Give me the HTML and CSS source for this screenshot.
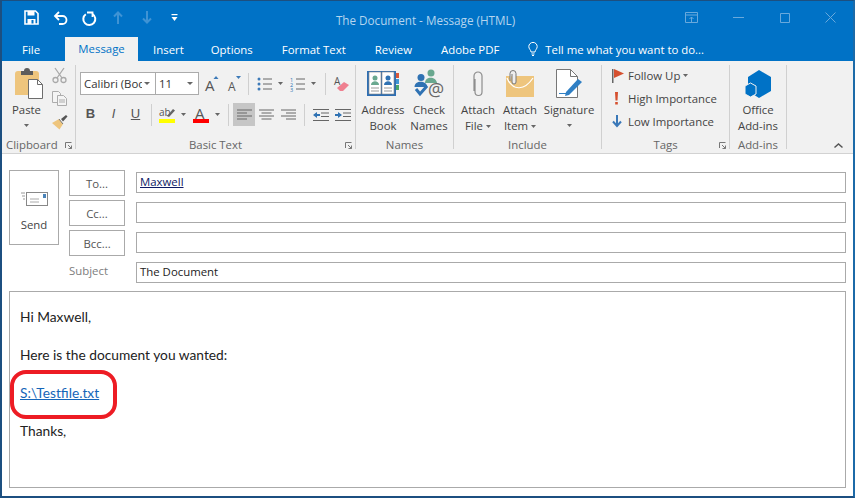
FILE: index.html
```html
<!DOCTYPE html>
<html lang="en">
<head>
<meta charset="utf-8">
<title>The Document - Message (HTML)</title>
<link rel="stylesheet" href="styles.css">
</head>
<body>
<div class="window">
  <header class="titlebar">
    <div class="qat">
      <svg class="q-save" width="15" height="15" viewBox="0 0 15 15"><path d="M1 1h10.500L14 3.500V14H1z" fill="none" stroke="#fff" stroke-width="1.600"/><rect x="3.500" y="1" width="7" height="4.500" fill="#fff"/><rect x="3.500" y="9" width="8" height="5" fill="#fff"/><rect x="7.500" y="10" width="2" height="3.500" fill="#0072c6"/></svg>
      <svg class="q-undo" width="15" height="14" viewBox="0 0 15 14"><path d="M2 5h7.500a4 4 0 0 1 4 4v0a4 4 0 0 1-4 4H6" fill="none" stroke="#fff" stroke-width="1.800"/><path d="M6 1 2 5l4 4" fill="none" stroke="#fff" stroke-width="1.800"/></svg>
      <svg class="q-redo" width="14" height="14" viewBox="0 0 14 14"><path d="M3.800 3.200a6 6 0 1 0 6.700-.2" fill="none" stroke="#fff" stroke-width="2"/><path d="M5 1.500h5.500V6" fill="none" stroke="#fff" stroke-width="1.800"/></svg>
      <svg class="q-up" width="10" height="13" viewBox="0 0 10 13"><path d="M5 13V2M1 5.500 5 1.500l4 4" fill="none" stroke="#3f93d4" stroke-width="2"/></svg>
      <svg class="q-down" width="10" height="13" viewBox="0 0 10 13"><path d="M5 0v11M1 7.500l4 4 4-4" fill="none" stroke="#3f93d4" stroke-width="2"/></svg>
      <svg class="q-more" width="7" height="8" viewBox="0 0 7 8"><rect width="6" height="1.200" x=".5" fill="#fff"/><path d="M.5 3h6L3.500 7z" fill="#fff"/></svg>
    </div>
    <div class="doc-title">The Document - Message (HTML)</div>
    <div class="winctl">
      <svg class="w-opt" width="13" height="11" viewBox="0 0 13 11"><path d="M.5.500h12v10H.500zM.5 3h12M6.500 10V5M4.500 7l2-2 2 2" fill="none" stroke="#69a9dc"/></svg>
      <svg class="w-min" width="11" height="11" viewBox="0 0 11 11"><path d="M0 5.500h11" stroke="#69a9dc"/></svg>
      <svg class="w-max" width="10" height="10" viewBox="0 0 10 10"><path d="M.5.500h9v9h-9z" fill="none" stroke="#69a9dc"/></svg>
      <svg class="w-close" width="11" height="11" viewBox="0 0 11 11"><path d="m.5.500 10 10M10.500.500l-10 10" stroke="#69a9dc"/></svg>
    </div>
  </header>

  <nav class="tabs">
    <span class="tab tab-file">File</span>
    <span class="tab tab-active">Message</span>
    <span class="tab tab-insert">Insert</span>
    <span class="tab tab-options">Options</span>
    <span class="tab tab-format">Format Text</span>
    <span class="tab tab-review">Review</span>
    <span class="tab tab-pdf">Adobe PDF</span>
    <svg class="bulb" width="10" height="14" viewBox="0 0 10 14"><path d="M3 10C3 8 .8 7 .8 4.600a4.200 4.200 0 0 1 8.400 0C9.200 7 7 8 7 10zM3.500 12h3M4 13.500h2" fill="none" stroke="#fff"/></svg>
    <span class="tab tab-tell">Tell me what you want to do...</span>
  </nav>

  <section class="ribbon">
    <div class="group g-clip">
      <div class="g-body">
        <div class="big w-paste">
          <div class="icon icon-paste">
            <svg width="29" height="31" viewBox="0 0 29 31"><path d="M1 6a3 3 0 0 1 3-3h18a3 3 0 0 1 3 3v21H1z" fill="#eec57d"/><path d="M7 3h3a3 3 0 0 1 6 0h3v4H7z" fill="#5c5c5c"/><path d="M14.500 11.500h9l5 5v14h-14z" fill="#fff" stroke="#6d6d6d"/><path d="M23.500 11.500v5h5" fill="none" stroke="#6d6d6d"/></svg>
          </div>
          <div class="lbl">Paste</div>
          <svg class="caret caret-low" width="5" height="3" viewBox="0 0 5 3"><path d="M0 0h5L2.500 3z"/></svg>
        </div>
        <div class="clip-tools">
          <svg width="15" height="16" viewBox="0 0 15 16"><path d="M3 1l7 10M12 1 5 11" stroke="#a9a9a9" stroke-width="1.300" fill="none"/><circle cx="3.500" cy="13" r="2.500" fill="none" stroke="#a9a9a9" stroke-width="1.300"/><circle cx="11.500" cy="13" r="2.500" fill="none" stroke="#a9a9a9" stroke-width="1.300"/></svg>
          <svg width="15" height="15" viewBox="0 0 15 15"><path d="M.5.500h6l2 2v9h-8z" fill="#f4f4f4" stroke="#acacac"/><path d="M5.500 4.500h6l3 3v7h-9z" fill="#f4f4f4" stroke="#acacac"/><path d="M7 9h6M7 11h6" stroke="#acacac"/></svg>
          <svg width="17" height="16" viewBox="0 0 17 16"><path d="M10 5 15 1l1.500 1.500L12 7.500z" fill="#555"/><path d="M1 9l7-4 4 5-3.500 5.500z" fill="#eec57d"/><path d="M8 5l4 5" stroke="#777"/></svg>
        </div>
      </div>
      <div class="g-foot"><span>Clipboard</span><svg class="launch" width="7" height="7" viewBox="0 0 7 7"><path d="M.5 6V.5H6.500M3 3l3.500 3.500M3.500 6.500h3v-3" fill="none" stroke="#777"/></svg></div>
    </div>

    <div class="group g-text">
      <div class="g-body text-body">
        <div class="tb-row row-top">
          <div class="combo combo-font"><span class="combo-val">Calibri (Bod</span><svg class="caret" width="6" height="3" viewBox="0 0 6 3"><path d="M0 0h6L3 3z"/></svg></div>
          <div class="combo combo-size"><span class="combo-val">11</span><svg class="caret" width="6" height="3" viewBox="0 0 6 3"><path d="M0 0h6L3 3z"/></svg></div>
          <svg class="m6" width="14" height="16" viewBox="0 0 14 16"><text x="0" y="15" class="glyph-a" font-size="15">A</text><path d="M8.500 3 11 0l2.500 3z" fill="#3d7ab8"/></svg>
          <svg class="m9" width="13" height="16" viewBox="0 0 13 16"><text x="0" y="15" class="glyph-a" font-size="12">A</text><path d="M8 0h5l-2.500 3z" fill="#3d7ab8"/></svg>
          <i class="sep m7"></i>
          <svg class="m8" width="16" height="16" viewBox="0 0 16 16"><circle cx="2" cy="3" r="1.500" fill="#3d7ab8"/><circle cx="2" cy="8" r="1.500" fill="#3d7ab8"/><circle cx="2" cy="13" r="1.500" fill="#3d7ab8"/><path d="M6 3h9M6 8h9M6 13h9" stroke="#666"/></svg>
          <svg class="caret m5" width="5" height="3" viewBox="0 0 5 3"><path d="M0 0h5L2.500 3z"/></svg>
          <svg class="m7" width="16" height="16" viewBox="0 0 16 16"><text x="0" y="5.500" font-size="5.500" class="num">1</text><text x="0" y="10.500" font-size="5.500" class="num">2</text><text x="0" y="15.500" font-size="5.500" class="num">3</text><path d="M6 3h9M6 8h9M6 13h9" stroke="#666"/></svg>
          <svg class="caret m5" width="5" height="3" viewBox="0 0 5 3"><path d="M0 0h5L2.500 3z"/></svg>
          <i class="sep m9"></i>
          <svg class="m8" width="16" height="16" viewBox="0 0 16 16"><text x="0" y="9" font-size="10" class="glyph-a">A</text><path d="M3 12 10 6l5 3-6 6H6z" fill="#ef8090"/></svg>
        </div>
        <div class="tb-row row-bottom">
          <b class="fmt m5">B</b>
          <em class="fmt m13">I</em>
          <u class="fmt fmt-u m12">U</u>
          <i class="sep m10"></i>
          <svg class="m7" width="16" height="18" viewBox="0 0 16 18"><text x="0" y="10" font-size="10" class="glyph-a">ab</text><path d="M8 10 14 3l2 1.500L10 11z" fill="#666"/><rect y="13" width="16" height="4" fill="#ff0"/></svg>
          <svg class="caret m6" width="5" height="3" viewBox="0 0 5 3"><path d="M0 0h5L2.500 3z"/></svg>
          <svg class="m7" width="16" height="18" viewBox="0 0 16 18"><text x="2" y="13" font-size="15" class="glyph-a">A</text><rect y="13" width="16" height="4" fill="#f00"/></svg>
          <svg class="caret m6" width="5" height="3" viewBox="0 0 5 3"><path d="M0 0h5L2.500 3z"/></svg>
          <i class="sep m8"></i>
          <div class="align-on m4"><svg width="15" height="12" viewBox="0 0 15 12"><path d="M0 1h15M0 4h10M0 7h15M0 10h10" stroke="#666"/></svg></div>
          <svg class="m4" width="15" height="12" viewBox="0 0 15 12"><path d="M0 1h15M2.500 4h10M0 7h15M2.500 10h10" stroke="#666"/></svg>
          <svg class="m7" width="15" height="12" viewBox="0 0 15 12"><path d="M0 1h15M5 4h10M0 7h15M5 10h10" stroke="#666"/></svg>
          <i class="sep m8"></i>
          <svg class="m8" width="16" height="12" viewBox="0 0 16 12"><path d="M0 .500h16M8 4h8M8 7.500h8M0 11.500h16" stroke="#666"/><path d="M0 6l4-3v2h3v2H4v2z" fill="#2f72b3"/></svg>
          <svg class="m6" width="16" height="12" viewBox="0 0 16 12"><path d="M0 .500h16M8 4h8M8 7.500h8M0 11.500h16" stroke="#666"/><path d="M7 6 3 3v2H0v2h3v2z" fill="#2f72b3"/></svg>
        </div>
      </div>
      <div class="g-foot foot-text"><span>Basic Text</span><svg class="launch" width="7" height="7" viewBox="0 0 7 7"><path d="M.5 6V.5H6.500M3 3l3.500 3.500M3.500 6.500h3v-3" fill="none" stroke="#777"/></svg></div>
    </div>

    <div class="group g-names">
      <div class="g-body">
        <div class="big w-addr">
          <div class="icon">
            <svg width="32" height="27" viewBox="0 0 32 27"><rect x="0" y="1" width="29" height="25" fill="#2f6fb3"/><rect x="29" y="3" width="3" height="5" fill="#d9583b"/><rect x="29" y="9" width="3" height="5" fill="#3f97d6"/><rect x="29" y="15" width="3" height="5" fill="#4aa66a"/><path d="M2 2h12v22H2zM15 2h12v22H15z" fill="#fff" stroke="#888" stroke-width=".6"/><circle cx="8" cy="8" r="2.500" fill="#69a88f"/><path d="M4 15c0-5 8-5 8 0z" fill="#69a88f"/><circle cx="21" cy="8" r="2.500" fill="#2f72b3"/><path d="M17 15c0-5 8-5 8 0z" fill="#2f72b3"/><path d="M4 18h8M4 21h8M17 18h8M17 21h8" stroke="#999"/></svg>
          </div>
          <div class="lbl">Address</div><div class="lbl">Book</div>
        </div>
        <div class="big w-check">
          <div class="icon">
            <svg width="30" height="30" viewBox="0 0 30 30"><circle cx="17" cy="4" r="3.500" fill="#69a88f"/><path d="M11 14c0-7 11-7 12 0z" fill="#69a88f"/><circle cx="7" cy="8.500" r="3.500" fill="#2f72b3"/><path d="M.5 18c0-7 12-7 13 0z" fill="#2f72b3"/><path d="M2 20l4 5 7-8" fill="none" stroke="#2f72b3" stroke-width="3"/><text x="14" y="27" font-size="18" class="glyph-at">@</text></svg>
          </div>
          <div class="lbl">Check</div><div class="lbl">Names</div>
        </div>
      </div>
      <div class="g-foot"><span>Names</span></div>
    </div>

    <div class="group g-incl">
      <div class="g-body">
        <div class="big w-attach">
          <div class="icon">
            <svg width="12" height="28" viewBox="0 0 12 28"><path d="M3 8v13a3.500 3.500 0 0 0 7 0V5a4 4 0 0 0-8 0v15" transform="translate(0 1)" fill="none" stroke="#8d8d8d" stroke-width="1.200"/></svg>
          </div>
          <div class="lbl">Attach</div>
          <div class="lbl">File<svg class="caret caret-in" width="5" height="3" viewBox="0 0 5 3"><path d="M0 0h5L2.500 3z"/></svg></div>
        </div>
        <div class="big w-item">
          <div class="icon">
            <svg width="28" height="27" viewBox="0 0 28 27"><rect y="6" width="28" height="21" fill="#eec57d"/><path d="M1 8c6 14 18 12 26 0" fill="none" stroke="#fff" stroke-width="1.200"/><path d="M4 11V3.500a3 3 0 0 1 6 0V12a2 2 0 0 1-4 0V4" fill="#eee" stroke="#777"/></svg>
          </div>
          <div class="lbl">Attach</div>
          <div class="lbl">Item<svg class="caret caret-in" width="5" height="3" viewBox="0 0 5 3"><path d="M0 0h5L2.500 3z"/></svg></div>
        </div>
        <div class="big w-sign">
          <div class="icon">
            <svg width="27" height="29" viewBox="0 0 27 29"><path d="M.5.500h14l7 7v21H.500z" fill="#fff" stroke="#777"/><path d="M14.500.500v7h7" fill="none" stroke="#777"/><path d="M10 23 22 10l4 3-13 13-4 1z" fill="#2f7fc4"/><path d="M3 24.500h11" stroke="#2f7fc4"/></svg>
          </div>
          <div class="lbl">Signature</div>
          <svg class="caret caret-low" width="5" height="3" viewBox="0 0 5 3"><path d="M0 0h5L2.500 3z"/></svg>
        </div>
      </div>
      <div class="g-foot"><span>Include</span></div>
    </div>

    <div class="group g-tags">
      <div class="g-body tag-list">
        <div class="tag"><span class="tag-ico"><svg width="12" height="14" viewBox="0 0 12 14"><rect width="1.500" height="14" fill="#666"/><path d="M2 0l10 4.500L2 9z" fill="#d5502f"/></svg></span>Follow Up<svg class="caret caret-in" width="5" height="3" viewBox="0 0 5 3"><path d="M0 0h5L2.500 3z"/></svg></div>
        <div class="tag"><span class="tag-ico"><svg width="13" height="13" viewBox="0 0 13 13"><path d="M3 0h3L5.500 8.500h-2zM3.200 10h2.600v2.600H3.200z" fill="#d5502f"/></svg></span>High Importance</div>
        <div class="tag"><span class="tag-ico"><svg width="13" height="13" viewBox="0 0 13 13"><path d="M5 0v11M1 6.500 5 11l4-4.500" fill="none" stroke="#3a78b8" stroke-width="2"/></svg></span>Low Importance</div>
      </div>
      <div class="g-foot foot-tags"><span>Tags</span><svg class="launch" width="7" height="7" viewBox="0 0 7 7"><path d="M.5 6V.5H6.500M3 3l3.500 3.500M3.500 6.500h3v-3" fill="none" stroke="#777"/></svg></div>
    </div>

    <div class="group g-addins">
      <div class="g-body">
        <div class="big w-office">
          <div class="icon">
            <svg width="26" height="28" viewBox="0 0 26 28"><path d="M14 0l12 7v14l-12 7-11-7V7z" fill="#0072c6"/><path d="M5.500 13l5.500 3v8l-5.500 3L0 24v-8z" fill="#0072c6" stroke="#f1f1f1"/></svg>
          </div>
          <div class="lbl">Office</div><div class="lbl">Add-ins</div>
        </div>
      </div>
      <div class="g-foot"><span>Add-ins</span></div>
    </div>

    <svg class="collapse" width="9" height="5" viewBox="0 0 9 5"><path d="M.5 4.500l4-3.500 4 3.500" fill="none" stroke="#555" stroke-width="1.500"/></svg>
  </section>

  <section class="compose">
    <div class="head">
      <button class="send">
        <svg width="27" height="14" viewBox="0 0 27 14"><path d="M0 1h4M1 4h3M2 7h2" stroke="#999"/><rect x="5.500" y=".5" width="21" height="13" fill="#fff" stroke="#888"/><rect x="22" y="2" width="3" height="4" fill="#4a83b8"/><path d="M9 7h9M9 10h9" stroke="#aaa"/></svg>
        <span>Send</span>
      </button>
      <div class="fields">
        <div class="field"><button class="addr">To...</button><div class="input"><span class="recipient">Maxwell</span></div></div>
        <div class="field"><button class="addr">Cc...</button><div class="input"></div></div>
        <div class="field"><button class="addr">Bcc...</button><div class="input"></div></div>
        <div class="field"><span class="subject-l">Subject</span><div class="input">The Document</div></div>
      </div>
    </div>
    <article class="body">
      <p>Hi Maxwell,</p>
      <p>Here is the document you wanted:</p>
      <p><a class="link" href="#">S:\Testfile.txt</a></p>
      <p>Thanks,</p>
      <div class="highlight"></div>
    </article>
  </section>
</div>
</body>
</html>
```

FILE: styles.css
```css
* { box-sizing: border-box; }
html, body { margin: 0; padding: 0; }
body { width: 855px; height: 498px; overflow: hidden; background: #fff; font-family: "Open Sans", "Noto Sans", sans-serif; font-size: 11.4px; color: #444; }
svg { overflow: visible; }
.window { position: relative; width: 855px; height: 498px; border-left: 2px solid #1c4f80; border-right: 2px solid #1c6aa8; border-bottom: 2px solid #1c4f80; border-top: 1px solid #1c4f80; display: flex; flex-direction: column; }

.titlebar { height: 36px; background: #0072c6; display: flex; align-items: center; position: relative; flex: none; }
.qat { display: flex; align-items: center; padding-left: 22px; height: 100%; padding-bottom: 3px; }
.q-undo { margin-left: 14px; }
.q-redo { margin-left: 14px; }
.q-up { margin-left: 17px; }
.q-down { margin-left: 19px; }
.q-more { margin-left: 19px; }
.doc-title { position: absolute; left: 0; right: 0; text-align: center; top: 11px; color: #b5d5ef; font-size: 11.7px; line-height: 16px; padding-right: 4px; }
.winctl { margin-left: auto; display: flex; align-items: center; padding-right: 17px; height: 100%; padding-bottom: 3px; }
.w-min { margin-left: 35px; }
.w-max { margin-left: 36px; }
.w-close { margin-left: 35px; }

.tabs { height: 24px; background: #0072c6; display: flex; align-items: center; color: #fff; flex: none; line-height: 23px; }
.tab { display: block; white-space: nowrap; }
.tab-file { margin-left: 20px; }
.tab-active { margin-left: 25px; width: 73px; text-align: center; background: #f1f1f1; color: #0072c6; height: 24px; }
.tab-insert { margin-left: 15px; }
.tab-options { margin-left: 27px; }
.tab-format { margin-left: 29px; }
.tab-review { margin-left: 29px; }
.tab-pdf { margin-left: 29px; }
.bulb { margin-left: 29px; }
.tab-tell { margin-left: 7px; }

.ribbon { height: 93px; background: #f1f1f1; border-bottom: 1px solid #d2d2d2; display: flex; padding-top: 4px; position: relative; flex: none; }
.group { height: 84px; border-right: 1px solid #d0d0d0; position: relative; display: flex; flex-direction: column; flex: none; }
.g-clip { width: 74px; }
.g-text { width: 280px; }
.g-names { width: 98px; }
.g-incl { width: 148px; }
.g-tags { width: 128px; }
.g-addins { width: 57px; }
.g-body { display: flex; height: 72px; flex: none; }
.g-foot { height: 14px; line-height: 14px; color: #666; text-align: center; position: relative; margin-top: 1px; }
.launch { position: absolute; right: 3px; top: 4px; }
.g-clip .g-foot { text-align: left; padding-left: 4px; }

.big { display: flex; flex-direction: column; align-items: center; flex: none; }
.icon { height: 37px; display: flex; align-items: center; justify-content: center; flex: none; }
.icon-paste { padding-left: 4px; }
.lbl { line-height: 16px; white-space: nowrap; color: #444; }
.caret { fill: #666; flex: none; }
.caret-low { margin-top: 6px; }
.caret-in { margin-left: 3px; vertical-align: 2px; }

.w-paste { width: 49px; }
.clip-tools { display: flex; flex-direction: column; gap: 8px; padding-top: 2px; align-items: center; width: 17px; }

.text-body { flex-direction: column; padding: 7px 0 0 4px; }
.tb-row { display: flex; align-items: center; height: 23px; flex: none; }
.row-bottom { margin-top: 8px; }
.combo { height: 23px; border: 1px solid #ababab; background: #fff; display: flex; align-items: center; color: #333; padding-left: 3px; justify-content: space-between; padding-right: 5px; overflow: hidden; }
.combo-font { width: 76px; }
.combo-size { width: 43px; border-left: 0; }
.combo-val { white-space: nowrap; overflow: hidden; width: 58px; }
.combo-size .combo-val { width: auto; }
.sep { display: block; width: 1px; height: 22px; background: #cfcfcf; flex: none; }
.glyph-a { fill: #555; font-family: "Open Sans", sans-serif; }
.glyph-at { fill: #666; font-family: "Open Sans", sans-serif; }
.num { fill: #2f72b3; font-family: "Open Sans", sans-serif; }
.fmt { display: block; width: 11px; text-align: center; font-size: 13px; color: #555; line-height: 16px; font-family: "Liberation Sans", sans-serif; flex: none; padding-bottom: 2px; height: 18px; }
.fmt-u { text-decoration: underline; }
.align-on { width: 22px; height: 23px; background: #c6c6c6; display: flex; align-items: center; justify-content: center; flex: none; }
.m4 { margin-left: 4px; } .m5 { margin-left: 5px; } .m6 { margin-left: 6px; } .m7 { margin-left: 7px; }
.m8 { margin-left: 8px; } .m9 { margin-left: 9px; } .m10 { margin-left: 10px; } .m12 { margin-left: 11px; } .m13 { margin-left: 12px; }

.w-addr { width: 54px; }
.w-check { width: 36px; margin-left: 1px; }
.w-attach { width: 48px; }
.w-item { width: 36px; }
.w-sign { width: 62px; }

.tag-list { flex-direction: column; padding: 0 0 0 10px; }
.tag { height: 23px; display: flex; align-items: center; white-space: nowrap; color: #444; line-height: 16px; }
.tag:first-child { margin-top: -1px; }
.tag-ico { width: 16px; display: flex; justify-content: flex-start; flex: none; }
.w-office { width: 56px; }
.collapse { position: absolute; right: 10px; top: 82px; }

.compose { flex: 1; background: #fff; display: flex; flex-direction: column; padding: 16px 7px 8px 7px; min-height: 0; }
.head { display: flex; height: 121px; flex: none; }
button { font: inherit; color: #444; background: #fff; border: 1px solid #aaa; padding: 0; border-radius: 0; }
.send { width: 50px; height: 75px; display: flex; flex-direction: column; align-items: center; padding-top: 21px; flex: none; }
.send span { margin-top: 11px; line-height: 16px; }
.fields { margin-left: 10px; flex: 1; display: flex; flex-direction: column; gap: 4px; }
.field { display: flex; align-items: flex-start; height: 26px; flex: none; }
.addr { width: 56px; height: 26px; text-align: center; color: #555; flex: none; }
.subject-l { width: 56px; color: #7d7d7d; flex: none; line-height: 22px; }
.input { margin: 2px 0 0 11px; flex: 1; height: 21px; border: 1px solid #aaa; line-height: 18px; padding-left: 3px; color: #222; }
.recipient { color: #0d1a66; text-decoration: underline; }
.body { position: relative; height: 197px; border: 1px solid #aaa; padding: 15px 10px 0; font-family: "Lato", sans-serif; font-size: 13.75px; line-height: 19px; color: #222; flex: none; }
.body p { margin: 0 0 19px; }
.link { color: #1565b8; text-decoration: underline; }
.highlight { position: absolute; left: 0; top: 78px; width: 107px; height: 49px; border: 4px solid #ed1c24; border-radius: 16px; }
```
